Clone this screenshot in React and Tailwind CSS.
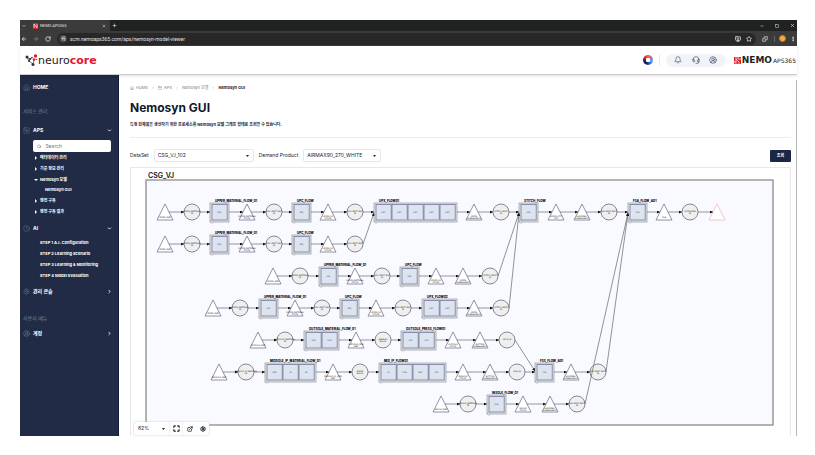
import {
  ArrowLeft, ArrowRight, RotateCw, Star, Puzzle, Minus, Square, X, Plus, ChevronDown, ChevronRight,
  House, PanelTop, Bell, Headset, CircleUserRound, Search, Settings, Clock, MonitorDown, EllipsisVertical,
  Maximize, ExternalLink, SlidersHorizontal, SquareActivity,
} from 'lucide-react';

// t = stock (triangle), c = buffer (circle), b = process group (x is the left edge)
const rows = [
  {
    y: 212,
    nodes: [
      { t: 't', x: 165, text: ['UPPER_MAT'] },
      { t: 'c', x: 192, text: ['UPPER_MATERIAL', 'IN'] },
      { t: 'b', x: 210, name: 'UPPER_MATERIAL_FLOW_01', cells: ['UPC'] },
      { t: 't', x: 247, text: ['UPPER_MATERIAL', 'STOCK'] },
      { t: 'c', x: 274, text: ['UPC INPUT BUF', 'IN'] },
      { t: 'b', x: 292, name: 'UPC_FLOW', cells: ['UPC'] },
      { t: 't', x: 328, text: ['UPPER_UC', 'STOCK'] },
      { t: 'c', x: 355, text: ['UPX INPUT BUF', 'IN'] },
      { t: 'b', x: 374, name: 'UPX_FLOW01', cells: ['UPF', 'UPF', 'UPF', 'UPS', 'UPS'] },
      { t: 't', x: 474, text: ['UPPER', 'SUBBALANCE'] },
      { t: 'c', x: 501, text: ['STITCH INPUT', 'IN'] },
      { t: 'b', x: 519, name: 'STITCH_FLOW', cells: ['UPS'] },
      { t: 't', x: 556, text: ['UPPER_STIT', 'OUT'] },
      { t: 't', x: 582, text: ['ASSEMBLY', 'SUBBALANCE'] },
      { t: 'c', x: 609, text: ['FSA INPUT BUFF', 'IN'] },
      { t: 'b', x: 628, name: 'FSA_FLOW_A01', cells: ['FSA'] },
      { t: 't', x: 664, text: ['FGA'] },
      { t: 'c', x: 690, text: ['OUTBOUND', 'IN'] },
      { t: 't', x: 717, text: [], alert: true },
    ],
  },
  {
    y: 244,
    nodes: [
      { t: 't', x: 165, text: ['UPPER_MAT'] },
      { t: 'c', x: 192, text: ['UPPER_MATERIAL', 'IN'] },
      { t: 'b', x: 210, name: 'UPPER_MATERIAL_FLOW_01', cells: ['UPC'] },
      { t: 't', x: 247, text: ['UPPER_MATERIAL', 'STOCK'] },
      { t: 'c', x: 274, text: ['UPC INPUT BUF', 'IN'] },
      { t: 'b', x: 292, name: 'UPC_FLOW', cells: ['UPC'] },
      { t: 't', x: 328, text: ['UPPER_UC', 'STOCK'] },
      { t: 'c', x: 355, text: ['UPX INPUT BUF', 'IN'] },
    ],
  },
  {
    y: 276,
    nodes: [
      { t: 't', x: 273, text: ['UPPER_MAT'] },
      { t: 'c', x: 300, text: ['UPPER_MATERIAL', 'IN'] },
      { t: 'b', x: 319, name: 'UPPER_MATERIAL_FLOW_01', cells: ['UPL'] },
      { t: 't', x: 355, text: ['UPPER_MATERIAL', 'STOCK'] },
      { t: 'c', x: 382, text: ['UPC INPUT BUF', 'IN'] },
      { t: 'b', x: 400, name: 'UPC_FLOW', cells: ['UPC'] },
      { t: 't', x: 436, text: ['UPPER_UC', 'STOCK'] },
      { t: 't', x: 463, text: ['UPPER', 'SUBBALANCE'] },
      { t: 'c', x: 490, text: ['STITCH INPUT', 'IN'] },
    ],
  },
  {
    y: 308,
    nodes: [
      { t: 't', x: 213, text: ['UPPER_MAT'] },
      { t: 'c', x: 240, text: ['UPPER_MATERIAL', 'IN'] },
      { t: 'b', x: 259, name: 'UPPER_MATERIAL_FLOW_01', cells: ['UPL'] },
      { t: 't', x: 295, text: ['UPPER_MATERIAL', 'STOCK'] },
      { t: 'c', x: 322, text: ['UPC INPUT BUF', 'IN'] },
      { t: 'b', x: 340, name: 'UPC_FLOW', cells: ['UPC'] },
      { t: 't', x: 376, text: ['UPPER_UC', 'STOCK'] },
      { t: 'c', x: 403, text: ['UPX INPUT BUF', 'IN'] },
      { t: 'b', x: 422, name: 'UPX_FLOW02', cells: ['UPF', 'UPS'] },
      { t: 't', x: 474, text: ['UPPER', 'SUBBALANCE'] },
      { t: 'c', x: 501, text: ['STITCH INPUT', 'IN'] },
    ],
  },
  {
    y: 340,
    nodes: [
      { t: 't', x: 258, text: ['OUTSOLE_MAT'] },
      { t: 'c', x: 285, text: ['OUTSOLE_MATERIAL', 'IN'] },
      { t: 'b', x: 304, name: 'OUTSOLE_MATERIAL_FLOW_01', cells: ['OSR', 'OSH'] },
      { t: 't', x: 356, text: ['OUTSOLE_SEMI', 'MAT'] },
      { t: 'c', x: 383, text: ['GARNISH', 'BLOCK'] },
      { t: 'b', x: 401, name: 'OUTSOLE_PRESS_FLOW01', cells: ['OSP', 'OSC'] },
      { t: 't', x: 453, text: ['OUTSOLE', 'STOCK'] },
      { t: 't', x: 480, text: ['BOTTOM', 'SUBBALANCE'] },
      { t: 'c', x: 507, text: ['OSFG_IN'] },
    ],
  },
  {
    y: 372,
    nodes: [
      { t: 't', x: 219, text: ['MIDSOLE_MAT'] },
      { t: 'c', x: 246, text: ['MIDSOLE_IP_MATERIAL', 'IN'] },
      { t: 'b', x: 265, name: 'MIDSOLE_IP_MATERIAL_FLOW_01', cells: ['EVR', 'IPI', 'IPL'] },
      { t: 't', x: 333, text: ['MIDSOLE_IP_SEMI', 'MAT'] },
      { t: 'c', x: 360, text: ['MIXED', 'BLOCK'] },
      { t: 'b', x: 379, name: 'MID_IP_FLOW01', cells: ['IPI', 'PHA', 'BUF', 'IPU'] },
      { t: 't', x: 463, text: ['MIDSOLE', 'STOCK'] },
      { t: 't', x: 490, text: ['BOTTOM', 'SUBBALANCE'] },
      { t: 'c', x: 517, text: ['IPSG_IN'] },
      { t: 'b', x: 535, name: 'FSS_FLOW_A01', cells: ['FSS'] },
      { t: 't', x: 571, text: ['ASSEMBLY', 'SUBBALANCE'] },
      { t: 'c', x: 598, text: ['FSA INPUT BUFF', 'IN'] },
    ],
  },
  {
    y: 404,
    nodes: [
      { t: 't', x: 441, text: ['INSOLE_MAT'] },
      { t: 'c', x: 468, text: ['INSOLE_MATERIAL', 'IN'] },
      { t: 'b', x: 487, name: 'INSOLE_FLOW_01', cells: ['SLN'] },
      { t: 't', x: 523, text: ['INSOLE', 'STOCK'] },
      { t: 't', x: 550, text: ['ASSEMBLY', 'SUBBALANCE'] },
      { t: 'c', x: 577, text: ['FSA INPUT BUFF', 'IN'] },
    ],
  },
];

// lines that join one row to a group of another row
const joins = [
  [363, 244, 374, 213],
  [498, 276, 519, 213],
  [509, 308, 519, 213],
  [515, 340, 535, 371],
  [606, 372, 628, 213],
  [585, 404, 628, 213],
];

const leftOf = (n) => (n.t === 't' ? n.x - 4 : n.t === 'c' ? n.x - 8 : n.x);
const rightOf = (n) => (n.t === 't' ? n.x + 4 : n.t === 'c' ? n.x + 8 : n.x + n.cells.length * 16 + 3);

const NodeText = ({ x, y, lines }) => (
  <g fontSize="2" textAnchor="middle" fill="#111">
    {lines.map((line, i) => (
      <text key={i} x={x} y={y + i * 2}>{line}</text>
    ))}
  </g>
);

const Node = ({ node, y }) => {
  if (node.t === 't') {
    return (
      <g>
        <path
          d={`M${node.x} ${y - 8}L${node.x + 8} ${y + 8}H${node.x - 8}Z`}
          fill="#fff"
          stroke={node.alert ? '#f3b6bb' : '#73768c'}
          strokeWidth="0.8"
          strokeLinejoin="round"
        />
        <NodeText x={node.x} y={y + (node.text.length > 1 ? 5 : 6)} lines={node.text} />
      </g>
    );
  }
  if (node.t === 'c') {
    return (
      <g>
        <circle cx={node.x} cy={y} r="8" fill="#efefef" stroke="#777a8e" strokeWidth="0.9" />
        <NodeText x={node.x} y={y} lines={node.text} />
      </g>
    );
  }
  const width = node.cells.length * 16 + 3;
  return (
    <g>
      <rect x={node.x} y={y - 9} width={width} height="19" fill="#e3e5e6" stroke="#92959b" strokeWidth="0.7" />
      {node.cells.map((cell, i) => (
        <g key={i}>
          <rect x={node.x + 2 + i * 16} y={y - 7.5} width="15.2" height="15.5" fill="#dce3f1" stroke="#747b98" strokeWidth="0.8" />
          <text x={node.x + 9.5 + i * 16} y={y + 1} fontSize="2" textAnchor="middle" fill="#333">{cell}</text>
        </g>
      ))}
      <circle cx={node.x + 2} cy={y + 10} r="1.2" fill="#fff" stroke="#888" strokeWidth="0.5" />
      <text x={node.x + 5} y={y - 10} fontSize="3" fontWeight="800" fill="#000" fontFamily="Inter, sans-serif">{node.name}</text>
    </g>
  );
};

const ModelGraph = () => (
  <svg viewBox="131 168 659 268" className="block w-full" fontFamily="'DejaVu Sans', sans-serif">
    <defs>
      <marker id="arrow" viewBox="0 0 4 4" refX="4" refY="2" markerWidth="3" markerHeight="3" markerUnits="userSpaceOnUse" orient="auto">
        <path d="M0 0L4 2L0 4Z" fill="#111" />
      </marker>
    </defs>
    <text x="148" y="178" fontSize="7" fontWeight="600" fill="#111" fontFamily="Inter, sans-serif">CSG_VJ</text>
    <rect x="146" y="180" width="627" height="245" fill="#f9faff" stroke="#8c8c8c" strokeWidth="1.3" />
    {rows.map((row) => (
      <g key={row.y}>
        {row.nodes.map((node, i) => <Node key={i} node={node} y={row.y} />)}
        {row.nodes.slice(1).map((node, i) => (
          <line
            key={i}
            x1={rightOf(row.nodes[i])}
            y1={row.y}
            x2={leftOf(node)}
            y2={row.y}
            stroke="#555"
            strokeWidth="0.6"
            markerEnd="url(#arrow)"
          />
        ))}
      </g>
    ))}
    {joins.map(([x1, y1, x2, y2], i) => (
      <line key={i} x1={x1} y1={y1} x2={x2} y2={y2} stroke="#666" strokeWidth="0.7" markerEnd="url(#arrow)" />
    ))}
  </svg>
);

const BrowserBar = () => (
  <div className="font-[Roboto,sans-serif] text-[#e2e2e2]">
    <div className="flex h-[11px] items-center justify-between bg-[#1f2221]">
      <div className="flex h-full items-center">
        <button aria-label="Search tabs" className="flex h-full w-[8px] items-center justify-center bg-[#3b3b3b]">
          <ChevronDown size={4} strokeWidth={4} />
        </button>
        <div className="flex h-full w-[82px] items-center gap-[2px] rounded-t-[2px] bg-[#3b3b3b] pl-[5px] pr-1">
          <svg width="5" height="6" viewBox="0 0 5 6">
            <rect width="5" height="6" fill="#e3202c" />
            <path d="M1 5V1L4 5V1" stroke="#fff" strokeWidth="0.7" fill="none" />
          </svg>
          <span className="flex-1 text-[4px] leading-none">NEMO APS365</span>
          <button aria-label="Close tab"><X size={4} strokeWidth={3} /></button>
        </div>
        <button aria-label="New tab" className="ml-[2px]"><Plus size={5} strokeWidth={3} /></button>
      </div>
      <div className="flex items-center gap-[11px] pr-[2px]">
        <button aria-label="Minimize"><Minus size={4} strokeWidth={3} /></button>
        <button aria-label="Maximize"><Square size={4} strokeWidth={3} /></button>
        <button aria-label="Close"><X size={5} strokeWidth={3} /></button>
      </div>
    </div>
    <div className="flex h-[15px] items-center gap-[6px] bg-[#3b3b3b] px-[1px]">
      <button aria-label="Back"><ArrowLeft size={6} strokeWidth={3} /></button>
      <button aria-label="Forward" className="text-[#888]"><ArrowRight size={6} strokeWidth={3} /></button>
      <button aria-label="Reload"><RotateCw size={6} strokeWidth={3} /></button>
      <div className="flex h-[12px] flex-1 items-center gap-[3px] rounded-full bg-[#282828] pl-[2px] pr-1">
        <span className="flex h-[8px] w-[8px] items-center justify-center rounded-full bg-[#3f3f3f]">
          <SlidersHorizontal size={5} strokeWidth={3} />
        </span>
        <input
          aria-label="Address"
          defaultValue="scm.nemoaps365.com/aps/nemosyn-model-viewer"
          className="min-w-0 flex-1 bg-transparent text-[5px] leading-none outline-none"
        />
        <button aria-label="Install app"><MonitorDown size={6} strokeWidth={3} /></button>
        <button aria-label="Bookmark" className="ml-[2px]"><Star size={6} strokeWidth={3} /></button>
      </div>
      <button aria-label="Extensions"><Puzzle size={6} strokeWidth={3} /></button>
      <div className="flex items-center gap-1">
        <span className="h-[6px] w-px bg-[#666]" />
        <span className="h-[7px] w-[7px] rounded-full border border-[#c77a1e] bg-[#f2ab45]" />
        <button aria-label="Menu"><EllipsisVertical size={6} strokeWidth={3} /></button>
      </div>
    </div>
  </div>
);

const Header = () => (
  <header className="relative flex h-[29px] items-center justify-between border-b border-[#cfcfcf] bg-white pl-[5px] pr-[1px] shadow-sm">
    <a href="#" className="flex items-center">
      <svg width="13" height="13" viewBox="0 0 13 13">
        <g stroke="#333" strokeWidth="0.7" fill="none">
          <path d="M2 3L5 5L4 7L8 10M5 5L7 4M4 7L2 3M8 10L9 6" />
        </g>
        <g fill="#333">
          <circle cx="2" cy="3" r="1.5" /><circle cx="5" cy="5" r="1.1" /><circle cx="4" cy="7" r="1" />
          <circle cx="8" cy="10.500" r="1.5" /><circle cx="7" cy="3.500" r="0.8" />
        </g>
        <g fill="#e8132d">
          <circle cx="10.500" cy="2" r="1.7" /><circle cx="9" cy="5.500" r="1.3" /><circle cx="11.500" cy="5.500" r="0.8" />
        </g>
      </svg>
      <span className="font-['DejaVu_Sans'] text-[11px] leading-none text-[#222]">
        neuro<b className="text-[#e8132d]">core</b>
      </span>
    </a>
    <div className="flex items-center gap-[6px]">
      <button
        aria-label="Theme"
        className="flex h-[10px] w-[10px] items-center justify-center rounded-full bg-[conic-gradient(#f97316,#ec4899,#38bdf8,#2563eb,#1e1b4b,#1e1b6b,#e11d48,#f97316)]"
      >
        <span className="h-[4px] w-[4px] rounded-[1px] bg-white" />
      </button>
      <span className="h-[10px] w-px bg-[#e5e7eb]" />
      <div className="flex h-[13px] w-[60px] items-center justify-around rounded-full bg-[#f1f3f9] px-1 text-[#46506b]">
        <button aria-label="Notifications"><Bell size={8} /></button>
        <button aria-label="Support"><Headset size={8} /></button>
        <button aria-label="Account"><CircleUserRound size={8} /></button>
      </div>
      <a href="#" className="ml-[2px] flex items-center gap-[1px] font-['DejaVu_Sans'] font-bold leading-none text-[#222]">
        <svg width="7" height="7" viewBox="0 0 7 7">
          <rect width="7" height="7" fill="#e3202c" />
          <path d="M2 0V7M2 2L5 5V7M4 0V2H7M2 5H0" stroke="#fff" strokeWidth="0.7" fill="none" />
        </svg>
        <span className="text-[9px]">NEMO</span>
        <span className="pt-[2px] text-[6px] font-normal">APS365</span>
      </a>
    </div>
  </header>
);

const Section = ({ icon: Icon, children, open }) => (
  <button className="flex h-[12px] w-full items-center gap-[3px] text-left text-[5px] font-bold text-white">
    <Icon size={7} strokeWidth={1.5} className="text-[#77809a]" />
    <span className="flex-1">{children}</span>
    {open ? <ChevronDown size={5} strokeWidth={4} /> : <ChevronRight size={5} strokeWidth={4} />}
  </button>
);

const apsMenu = [
  { name: '메타데이터 관리' },
  { name: '기준 정보 관리' },
  { name: 'Nemosyn 모델', open: true, child: 'Nemosyn GUI' },
  { name: '엔진 구동' },
  { name: '엔진 구동 결과' },
];

const aiMenu = ['STEP 1 A.I. Configuration', 'STEP 2 Learning Scenario', 'STEP 3 Learning & Monitoring', 'STEP 4 Model Evaluation'];

const Sidebar = () => (
  <aside className="w-[99px] shrink-0 border-r border-[#101b3b] bg-[#222b45] pl-[3px] pr-[6px] pt-[6px] leading-none">
    <a href="#" className="flex h-[12px] items-center gap-[3px] text-[5px] font-bold text-white">
      <House size={7} strokeWidth={1.5} className="text-[#77809a]" />HOME
    </a>
    <h2 className="flex h-[31px] items-center pt-[5px] text-[5px] text-[#7b8399]">서비스 관리</h2>
    <Section icon={SquareActivity} open>APS</Section>
    <label className="ml-[10px] mr-[1px] mt-1 flex h-[12px] items-center gap-1 rounded-[2px] bg-white px-1 text-[#555]">
      <Search size={5} />
      <input type="search" placeholder="Search" className="w-full min-w-0 text-[5px] outline-none placeholder:text-[#777]" />
    </label>
    <ul className="pl-[11px] text-[4px] font-bold text-white">
      {apsMenu.map((item) => (
        <li key={item.name}>
          <button className="flex h-[11px] items-center gap-[2px]">
            <svg width="4" height="4" viewBox="0 0 4 4" fill="#fff">
              {item.open ? <path d="M0 1H4L2 3Z" /> : <path d="M1 0V4L3 2Z" />}
            </svg>
            {item.name}
          </button>
          {item.child && <a href="#" className="flex h-[10px] items-center pl-[11px]">{item.child}</a>}
        </li>
      ))}
    </ul>
    <div className="pt-[5px]"><Section icon={Clock} open>AI</Section></div>
    <ul className="mt-[3px] pl-[17px] text-[4px] font-bold text-white">
      {aiMenu.map((item) => (
        <li key={item}><a href="#" className="flex h-[11px] items-center whitespace-nowrap">{item}</a></li>
      ))}
    </ul>
    <div className="pt-[4px]"><Section icon={Settings}>관리 콘솔</Section></div>
    <h2 className="flex h-[30px] items-center pt-[12px] text-[5px] text-[#7b8399]">사용자 메뉴</h2>
    <Section icon={CircleUserRound}>계정</Section>
  </aside>
);

const Caret = () => (
  <svg width="3" height="2" viewBox="0 0 3 2" className="mr-1 shrink-0" fill="#222"><path d="M0 0H3L1.500 2Z" /></svg>
);

const Field = ({ id, label, value, width }) => (
  <div className="flex items-center gap-[5px]">
    <label htmlFor={id}>{label}</label>
    <div className={`flex h-[13px] items-center rounded-[2px] border border-[#e5e7eb] bg-white ${width}`}>
      <select id={id} className="h-full w-full appearance-none pl-[3px] outline-none">
        <option>{value}</option>
      </select>
      <Caret />
    </div>
  </div>
);

const Crumb = () => <ChevronRight size={4} strokeWidth={3} className="text-[#bbb]" />;

const App = () => (
  <div className="bg-white pb-[19px] pl-5 pr-[18px] pt-5 font-[Inter,'Noto_Sans_CJK_KR',sans-serif] text-[5px] leading-none text-[#1c2233]">
    <BrowserBar />
    <Header />
    <div className="flex">
      <Sidebar />
      <main className="mt-[5px] min-w-0 flex-1 border-r border-[#b5b5b5] pl-[11px] pr-[5px]">
        <nav className="flex h-[16px] items-center gap-[3px] text-[4px] text-[#777]">
          <a href="#" className="flex items-center gap-[2px]"><House size={4} />HOME</a>
          <Crumb />
          <a href="#" className="flex items-center gap-[2px]"><PanelTop size={4} />APS</a>
          <Crumb />
          <a href="#">Nemosyn 모델</a>
          <Crumb />
          <a href="#" className="font-bold text-[#1c2233]">Nemosyn GUI</a>
        </nav>
        <h1 className="mt-[4px] text-[12px] font-bold leading-[16px] text-[#10182c]">Nemosyn GUI</h1>
        <p className="mt-[6px] h-[16px] border-b border-[#eeeeee] text-[4px] font-bold leading-[6px]">
          특정 완제품을 생산하기 위한 프로세스를 Nemosyn 모델 그래프 형태로 조회할 수 있습니다.
        </p>
        <form className="mt-[11px] flex items-center gap-[5px]" onSubmit={(e) => e.preventDefault()}>
          <Field id="dataset" label="DataSet" value="CSG_VJ_102" width="w-[100px]" />
          <Field id="product" label="Demand Product" value="AIRMAX90_270_WHITE" width="w-[78px]" />
          <button type="submit" className="ml-auto h-[12px] w-[21px] rounded-[1px] bg-[#1b2746] text-[4px] font-bold text-white">조회</button>
        </form>
        <section className="relative mt-[5px] border-x border-t border-[#e8e8e8]">
          <ModelGraph />
          <div className="absolute bottom-[1px] left-[3px] flex h-[13px] items-center rounded-[2px] bg-white shadow-[0_0_2px_#bbb]">
            <div className="flex w-[35px] items-center">
              <select aria-label="Zoom" className="w-full appearance-none pl-1 outline-none">
                <option>62%</option>
              </select>
              <Caret />
            </div>
            <button aria-label="Fit to screen" className="flex h-full w-[14px] items-center justify-center border-x border-[#eee]">
              <Maximize size={7} strokeWidth={4} />
            </button>
            <button aria-label="Export" className="flex w-[13px] justify-center"><ExternalLink size={6} strokeWidth={3} /></button>
            <button aria-label="Settings" className="flex w-[13px] justify-center"><Settings size={6} strokeWidth={4} /></button>
          </div>
        </section>
      </main>
    </div>
  </div>
);

export default App;
